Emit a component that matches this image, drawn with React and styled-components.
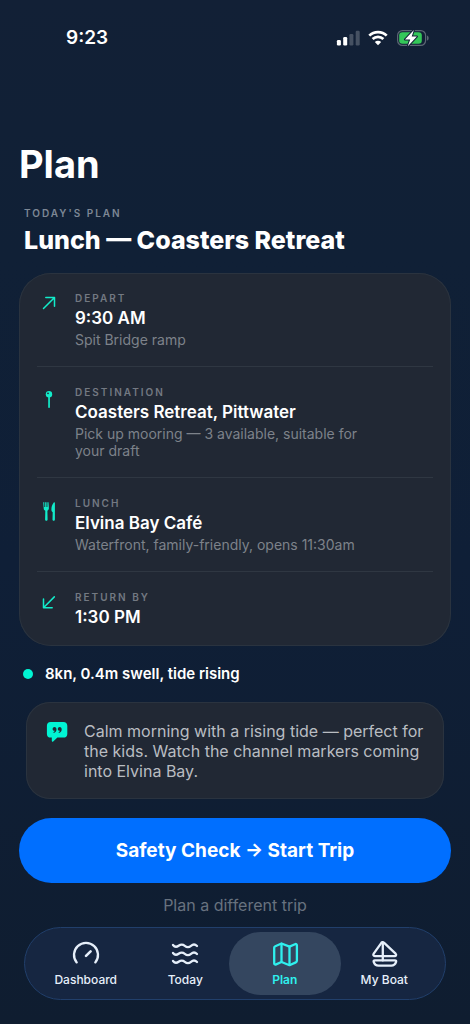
import React from "react";
import styled, { createGlobalStyle } from "styled-components";

const accent = "#12ecca";

const GlobalStyle = createGlobalStyle`
  *, *::before, *::after { box-sizing: border-box; }
  body {
    margin: 0;
    background: #0f1e33;
    font-family: Inter, "Liberation Sans", sans-serif;
    color: #fff;
  }
  h1, h2, h3, p, ul { margin: 0; padding: 0; }
  button { font-family: inherit; }
`;

const Screen = styled.div`
  min-height: 100vh;
  display: flex;
  flex-direction: column;
  background: linear-gradient(180deg, #122036 0%, #102036 25%, #0f1f37 55%, #0f1d30 100%);
`;

const StatusBar = styled.header`
  display: flex;
  align-items: center;
  justify-content: space-between;
  height: 76px;
  padding: 0 40px 0 66px;
`;

const Clock = styled.time`
  font-size: 19px;
  line-height: 24px;
  font-weight: 600;
`;

const StatusIcons = styled.div`
  display: flex;
  align-items: center;
  gap: 8px;
`;

const Main = styled.main`
  display: flex;
  flex-direction: column;
  padding: 64px 19px 12px;
`;

const Title = styled.h1`
  font-size: 38px;
  line-height: 48px;
  font-weight: 700;
`;

const PlanHeading = styled.div`
  display: flex;
  flex-direction: column;
  gap: 4px;
  padding: 18px 5px 17px;
`;

const Caption = styled.p`
  font-size: 10px;
  line-height: 14px;
  font-weight: 600;
  letter-spacing: 2px;
  text-transform: uppercase;
  color: ${(p) => p.$color || "#737982"};
`;

const TripName = styled.h2`
  font-size: 25px;
  line-height: 32px;
  font-weight: 800;
`;

const Card = styled.section`
  background: #212834;
  border-radius: 32px;
  padding: 0 18px;
  box-shadow: inset 0 0 0 1px #2a333f;
`;

const Stop = styled.div`
  display: flex;
  gap: 14px;
  padding: 18px 0;
  & + & { border-top: 1px solid #2f3742; }
`;

const StopIcon = styled.svg`
  flex: none;
  width: 24px;
  height: 26px;
  color: ${accent};
`;

const StopText = styled.div`
  display: flex;
  flex-direction: column;
  gap: 2px;
  max-width: 300px;
`;

const StopTitle = styled.h3`
  font-size: 17px;
  line-height: 22px;
  font-weight: 600;
`;

const StopDetail = styled.p`
  font-size: 14px;
  line-height: 17px;
  color: #7d828a;
`;

const Conditions = styled.p`
  display: flex;
  align-items: center;
  gap: 12px;
  padding: 18px 4px;
  font-size: 15px;
  line-height: 20px;
  font-weight: 600;
`;

const Dot = styled.span`
  width: 10px;
  height: 10px;
  border-radius: 50%;
  background: #00f5d4;
`;

const Note = styled.section`
  display: flex;
  gap: 16px;
  margin: 0 7px;
  padding: 19px 20px 18px;
  border-radius: 24px;
  background: #212834;
  box-shadow: inset 0 0 0 1px #2a333f;
`;

const NoteText = styled.p`
  font-size: 16px;
  line-height: 20px;
  color: #b9bdc2;
`;

const PrimaryButton = styled.button`
  height: 65px;
  margin-top: 19px;
  border: 0;
  border-radius: 33px;
  background: #006fff;
  color: #fff;
  font-size: 19px;
  font-weight: 700;
`;

const TextButton = styled.button`
  align-self: center;
  margin-top: 12px;
  padding: 0;
  border: 0;
  background: none;
  color: #68727f;
  font-size: 16px;
  line-height: 20px;
`;

const TabBar = styled.nav`
  display: flex;
  height: 73px;
  margin: 0 24px 24px;
  padding: 0 11px;
  border: 1px solid #213f6b;
  border-radius: 37px;
  background: #162641;
`;

const Tab = styled.a`
  position: relative;
  flex: 1;
  display: flex;
  flex-direction: column;
  align-items: center;
  padding-top: 11px;
  color: ${(p) => (p.$active ? "#2ff0ee" : "#e6effa")};
  font-size: 12px;
  line-height: 18px;
  font-weight: ${(p) => (p.$active ? 600 : 500)};
  text-decoration: none;

  &::before {
    content: "";
    position: absolute;
    inset: 4px -6px;
    border-radius: 32px;
    background: ${(p) => (p.$active ? "#34465f" : "transparent")};
  }
`;

const TabIcon = styled.svg`
  position: relative;
  width: 32px;
  height: 32px;
  fill: none;
  stroke: currentColor;
  stroke-width: 2.3;
  stroke-linecap: round;
  stroke-linejoin: round;
`;

const TabLabel = styled.span`
  position: relative;
`;

const SignalIcon = () => (
  <svg width="24" height="16" viewBox="0 0 24 16" fill="#fff" aria-label="Signal">
    <rect x="0.9" y="10" width="4" height="5.4" rx="1.2" />
    <rect x="7.2" y="7" width="4" height="8.4" rx="1.2" />
    <rect x="13.4" y="4" width="4" height="11.4" rx="1.2" opacity="0.22" />
    <rect x="19.7" y="0.8" width="4" height="14.6" rx="1.2" opacity="0.22" />
  </svg>
);

const WifiIcon = () => (
  <svg width="20" height="16" viewBox="0 0 20 16" fill="none" stroke="#fff" strokeWidth="2.7" aria-label="Wi-Fi">
    <path d="M1.3 5.6C6 .9 14 .9 18.7 5.6" />
    <path d="M4.6 9.1C7.7 6.2 12.3 6.2 15.4 9.1" />
    <path d="M10 15.2 6.8 12c1.8-1.7 4.6-1.7 6.4 0z" fill="#fff" stroke="none" />
  </svg>
);

const BatteryIcon = () => (
  <svg width="34" height="18" viewBox="0 0 34 18" fill="none" aria-label="Battery charging">
    <rect x="1.6" y="1.6" width="28" height="14.8" rx="4.8" stroke="#5c6774" strokeWidth="1.2" />
    <path d="M31 6.4c2.2.7 2.2 4.5 0 5.2z" fill="#5c6774" />
    <rect x="3.2" y="3.2" width="22.6" height="11.6" rx="3.2" fill="#34c759" />
    <path
      d="M17.9.9 9 10.4h5.2l-2.4 6.9 9.1-9.7h-5.2z"
      fill="#fff"
      stroke="#122036"
      strokeWidth="2"
      strokeLinejoin="round"
      paintOrder="stroke"
    />
  </svg>
);

const stopIcons = {
  depart: (
    <g fill="none" stroke="currentColor" strokeWidth="1.5" strokeLinecap="round" strokeLinejoin="round">
      <path d="M6.5 17.5 17.3 6.7M8.8 6.5h8.7v8.7" />
    </g>
  ),
  destination: (
    <>
      <rect x="11.2" y="10" width="1.7" height="13" rx="0.8" fill="currentColor" />
      <circle cx="12" cy="9.3" r="3.2" fill="currentColor" />
      <circle cx="11" cy="8.3" r="0.9" fill="#212834" />
    </>
  ),
  lunch: (
    <g fill="currentColor">
      <path d="M6.2 6.3h1.1v4.6h.9V6.3h1.3v4.6h.9V6.3h1.1l.4 6c0 1.3-.7 2-1.5 2.5l.2 8.6c0 1.9-2.5 1.9-2.5 0l.2-8.6c-1-.5-1.7-1.2-1.6-2.5z" />
      <path d="M17.9 7c0-.9-.7-1-1.3-.3-1.4 1.7-2.2 4.1-2.2 6.7 0 1.4.5 2.1 1.3 2.8l-.2 7.2c0 1.8 2.4 1.8 2.4 0z" />
    </g>
  ),
  back: (
    <g fill="none" stroke="currentColor" strokeWidth="1.5" strokeLinecap="round" strokeLinejoin="round">
      <path d="M17.3 6.9 6.7 17.5M6.5 9v8.7h8.7" />
    </g>
  ),
};

const QuoteIcon = styled.svg`
  flex: none;
  width: 22px;
  height: 22px;
`;

const stops = [
  { icon: "depart", label: "Depart", title: "9:30 AM", detail: "Spit Bridge ramp" },
  {
    icon: "destination",
    label: "Destination",
    title: "Coasters Retreat, Pittwater",
    detail: "Pick up mooring — 3 available, suitable for your draft",
  },
  {
    icon: "lunch",
    label: "Lunch",
    title: "Elvina Bay Café",
    detail: "Waterfront, family-friendly, opens 11:30am",
  },
  { icon: "back", label: "Return by", title: "1:30 PM" },
];

const tabs = [
  {
    name: "Dashboard",
    icon: (
      <>
        <path d="M6.7 23.4A12 12 0 1 1 25.3 23.4" />
        <path d="M16 16.9 20.6 12.3" strokeWidth="2.6" />
      </>
    ),
  },
  {
    name: "Today",
    icon: (
      <>
        {[7, 15, 23].map((y) => (
          <path
            key={y}
            d={`M4 ${y - 1}C6 ${y + 1.6} 7.700 ${y + 1.200} 9.600 ${y - 0.200}S13.600 ${y - 2} 15.800 ${y - 0.200}S19.800 ${y + 1.600} 22 ${y - 0.200}S26 ${y - 2} 28 ${y}`}
          />
        ))}
      </>
    ),
  },
  {
    name: "Plan",
    active: true,
    icon: (
      <>
        <path d="M5.200 8.800c0-.8.4-1.300 1.100-1.600L12.500 4.500 20.500 7.600 26 5.200c1.100-.5 1.900.1 1.900 1.200v15.400c0 .8-.4 1.300-1.100 1.600L20.500 26.200l-8-3.200L7.100 25.400c-1.100.5-1.900-.1-1.900-1.200z" />
        <path d="M12.500 4.800v18M20.500 7.800v18" />
      </>
    ),
  },
  {
    name: "My Boat",
    icon: (
      <>
        <path d="M13.400 3.800 5.700 14.600c-.8 1.200-.3 2.500 1.200 2.500h19.700c1.500 0 2-1.400 1-2.400L15.900 3.700c-.8-.8-1.900-.7-2.500.1z" />
        <path d="M14.800 4v17.400" />
        <path d="M6.900 21.300h20c1 0 1.500.7 1.200 1.600-.7 2.200-2.300 3.700-4.800 3.700H10.500c-2.500 0-4.100-1.500-4.800-3.700-.3-.9.2-1.600 1.200-1.600z" />
      </>
    ),
  },
];

export default function App() {
  return (
    <Screen>
      <GlobalStyle />
      <StatusBar>
        <Clock>9:23</Clock>
        <StatusIcons>
          <SignalIcon />
          <WifiIcon />
          <BatteryIcon />
        </StatusIcons>
      </StatusBar>
      <Main>
        <Title>Plan</Title>
        <PlanHeading>
          <Caption $color="#7d8795">Today's plan</Caption>
          <TripName>Lunch — Coasters Retreat</TripName>
        </PlanHeading>
        <Card>
          {stops.map((s) => (
            <Stop key={s.icon}>
              <StopIcon viewBox="0 0 24 26" aria-hidden="true">
                {stopIcons[s.icon]}
              </StopIcon>
              <StopText>
                <Caption>{s.label}</Caption>
                <StopTitle>{s.title}</StopTitle>
                {s.detail && <StopDetail>{s.detail}</StopDetail>}
              </StopText>
            </Stop>
          ))}
        </Card>
        <Conditions>
          <Dot />
          8kn, 0.4m swell, tide rising
        </Conditions>
        <Note>
          <QuoteIcon viewBox="0 0 22 22" aria-hidden="true">
            <path
              d="M4.600 1h12.800C19.800 1 21.300 2.500 21.300 4.700v8.200c0 2.200-1.500 3.700-3.900 3.700h-6l-4.200 3.800c-.7.6-1.400.3-1.400-.6v-3.200H4.600C2.300 16.600.9 15.100.9 12.900V4.700C.9 2.500 2.300 1 4.600 1z"
              fill="#00f5d4"
            />
            <path
              d="M6.600 8.100c0-1.200.9-2 1.900-2 1.300 0 2 1 2 2.300 0 1.900-1.200 3.100-2.800 3.500l-.3-.7c.8-.3 1.300-.8 1.500-1.400-1.300.3-2.300-.5-2.300-1.700zM11.800 8.100c0-1.200.9-2 1.900-2 1.300 0 2 1 2 2.300 0 1.900-1.200 3.100-2.800 3.500l-.3-.7c.8-.3 1.300-.8 1.500-1.400-1.300.3-2.300-.5-2.300-1.700z"
              fill="#212834"
            />
          </QuoteIcon>
          <NoteText>
            Calm morning with a rising tide — perfect for the kids. Watch the channel markers coming into Elvina Bay.
          </NoteText>
        </Note>
        <PrimaryButton type="button">Safety Check → Start Trip</PrimaryButton>
        <TextButton type="button">Plan a different trip</TextButton>
      </Main>
      <TabBar>
        {tabs.map((t) => (
          <Tab key={t.name} href="#" $active={t.active} aria-current={t.active ? "page" : undefined}>
            <TabIcon viewBox="0 0 32 32" aria-hidden="true">
              {t.icon}
            </TabIcon>
            <TabLabel>{t.name}</TabLabel>
          </Tab>
        ))}
      </TabBar>
    </Screen>
  );
}
